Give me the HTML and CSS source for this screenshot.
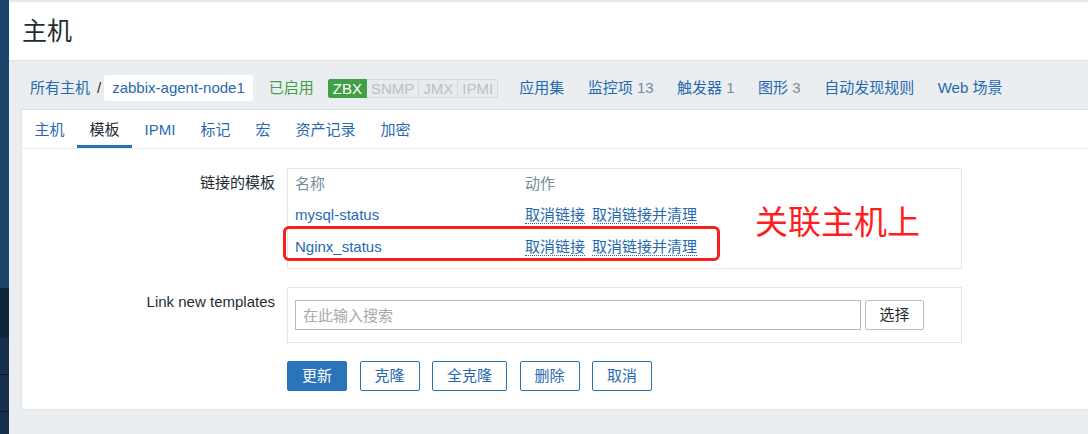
FILE: index.html
```html
<!DOCTYPE html>
<html lang="zh-CN">
<head>
<meta charset="utf-8">
<title>主机</title>
<link rel="stylesheet" href="styles.css">
</head>
<body>
<div class="app">
  <aside class="sidebar">
    <div class="sb-a"></div>
    <div class="sb-b"></div>
    <div class="sb-c"></div>
    <div class="sb-c"></div>
    <div class="sb-d"></div>
  </aside>
  <div class="main">
    <header class="page-header"><h1 class="title">主机</h1></header>
    <div class="content">
      <nav class="crumbs">
        <a class="link" href="#">所有主机</a><span class="crumb-sep">/</span><span class="crumb-current">zabbix-agent-node1</span>
        <span class="status-on">已启用</span>
        <span class="tags"><span class="tag tag-on">ZBX</span><span class="tag">SNMP</span><span class="tag">JMX</span><span class="tag">IPMI</span></span>
        <span class="nav-links">
          <a class="link" href="#">应用集</a>
          <a class="link" href="#">监控项<span class="count"> 13</span></a>
          <a class="link" href="#">触发器<span class="count"> 1</span></a>
          <a class="link" href="#">图形<span class="count"> 3</span></a>
          <a class="link" href="#">自动发现规则</a>
          <a class="link" href="#">Web 场景</a>
        </span>
      </nav>
      <section class="panel">
        <ul class="tabs">
          <li class="tab">主机</li>
          <li class="tab active">模板</li>
          <li class="tab">IPMI</li>
          <li class="tab">标记</li>
          <li class="tab">宏</li>
          <li class="tab">资产记录</li>
          <li class="tab">加密</li>
        </ul>
        <form class="form">
          <div class="form-row">
            <label class="form-label">链接的模板</label>
            <div class="box box-table">
              <table class="tpl-table">
                <thead>
                  <tr><th class="col-name">名称</th><th>动作</th></tr>
                </thead>
                <tbody>
                  <tr>
                    <td><a class="link" href="#">mysql-status</a></td>
                    <td><a class="link-dotted" href="#">取消链接</a><a class="link-dotted" href="#">取消链接并清理</a></td>
                  </tr>
                  <tr>
                    <td><a class="link" href="#">Nginx_status</a></td>
                    <td><a class="link-dotted" href="#">取消链接</a><a class="link-dotted" href="#">取消链接并清理</a></td>
                  </tr>
                </tbody>
              </table>
            </div>
          </div>
          <div class="form-row">
            <label class="form-label">Link new templates</label>
            <div class="box box-search">
              <input class="search-input" type="text" placeholder="在此输入搜索">
              <button class="btn-select" type="button">选择</button>
            </div>
          </div>
          <div class="form-actions">
            <button class="btn btn-primary" type="button">更新</button>
            <button class="btn" type="button">克隆</button>
            <button class="btn" type="button">全克隆</button>
            <button class="btn" type="button">删除</button>
            <button class="btn" type="button">取消</button>
          </div>
        </form>
      </section>
    </div>
  </div>
</div>
<div class="annot-box"></div>
<div class="annot-text">关联主机上</div>
</body>
</html>
```

FILE: styles.css
```css
html, body {
  margin: 0;
  padding: 0;
}
body {
  font-family: "Liberation Sans", "Noto Sans CJK SC", sans-serif;
  font-size: 15px;
  line-height: 20px;
  color: #1f2c33;
  background: #ebeef0;
  height: 434px;
  overflow: hidden;
  position: relative;
}
a {
  text-decoration: none;
}
.app {
  display: flex;
  height: 434px;
}
.sidebar {
  width: 9px;
  flex: none;
  display: flex;
  flex-direction: column;
  background: #15314b;
}
.sb-a { height: 288px; background: #1a4469; }
.sb-b { height: 50px; background: #0f2638; }
.sb-c { height: 36px; background: #15314b; border-bottom: 1px solid #0b1b29; }
.sb-d { flex: 1; background: #15314b; }

.main {
  flex: 1;
  min-width: 0;
  display: flex;
  flex-direction: column;
}
.page-header {
  height: 58px;
  border-top: 2px solid #e6e8ea;
  border-bottom: 1px solid #dfe4e7;
  background: #fff;
  display: flex;
  align-items: center;
  padding-left: 13px;
}
.title {
  margin: 0;
  font-size: 25px;
  font-weight: normal;
  line-height: 30px;
  color: #1f2c33;
}
.content {
  padding-left: 12px;
}
.crumbs {
  display: flex;
  align-items: center;
  height: 26px;
  padding: 14px 0 8px 9px;
  white-space: nowrap;
}
.link {
  color: #2769b0;
}
.crumb-sep {
  margin: 0 3px 0 7px;
  color: #1f2c33;
}
.crumb-current {
  background: #fff;
  color: #2769b0;
  height: 26px;
  line-height: 26px;
  padding: 0 8px;
  border-radius: 2px;
}
.status-on {
  margin-left: 16px;
  color: #429e47;
}
.tags {
  display: flex;
  margin-left: 14px;
}
.tag {
  height: 17px;
  line-height: 17px;
  padding: 0 4px;
  border: 1px solid #d5dade;
  background: #e8ebed;
  color: #b8c1c8;
  margin-left: -1px;
}
.tag:first-child {
  margin-left: 0;
  border-radius: 2px 0 0 2px;
}
.tag:last-child {
  border-radius: 0 2px 2px 0;
}
.tag-on {
  background: #429e47;
  border-color: #429e47;
  color: #fff;
  position: relative;
}
.nav-links {
  display: flex;
  gap: 23.5px;
  margin-left: 21px;
}
.count {
  color: #768d99;
}

.panel {
  background: #fff;
  border: 1px solid #dfe4e7;
  border-right: none;
}
.tabs {
  display: flex;
  margin: 0;
  padding: 0;
  list-style: none;
  border-bottom: 1px solid #ebeef0;
}
.tab {
  height: 38px;
  box-sizing: border-box;
  padding: 10px 12.5px 0;
  line-height: 20px;
  border-bottom: 3px solid transparent;
  color: #2769b0;
}
.tab.active {
  border-bottom-color: #2a72b6;
  color: #1f2c33;
}
.form {
  margin: 0;
  padding: 19px 0 18px;
}
.form-row {
  display: grid;
  grid-template-columns: 253px 675px;
  column-gap: 12px;
  margin-bottom: 18px;
}
.form-label {
  text-align: right;
  padding-top: 5px;
  line-height: 20px;
  color: #1f2c33;
}
.box {
  box-sizing: border-box;
  width: 675px;
  border: 1px solid #e6e6e6;
}
.box-table {
  padding: 0 7px 5px;
}
.tpl-table {
  border-collapse: collapse;
}
.tpl-table th {
  font-weight: normal;
  color: #768d99;
  text-align: left;
  height: 30px;
  padding: 0;
  vertical-align: middle;
}
.tpl-table td {
  height: 32px;
  padding: 0;
  vertical-align: middle;
}
.col-name {
  width: 230px;
}
.link-dotted {
  color: #2769b0;
  border-bottom: 1px dotted #2769b0;
  margin-right: 7px;
}
.box-search {
  display: flex;
  gap: 4px;
  padding: 12px 7px;
}
.search-input {
  box-sizing: border-box;
  width: 566px;
  height: 30px;
  border: 1px solid #acbbc2;
  border-radius: 0;
  padding: 0 7px;
  margin: 0;
  font-family: "Liberation Sans", "Noto Sans CJK SC", sans-serif;
  font-size: 15px;
  color: #1f2c33;
  outline: none;
}
.search-input::placeholder {
  color: #a9a9a9;
}
.btn-select {
  box-sizing: border-box;
  height: 30px;
  padding: 0 13.5px;
  margin: 0;
  border: 1px solid #b4c0c8;
  border-radius: 2px;
  background: #fff;
  color: #1f2c33;
  font-family: "Liberation Sans", "Noto Sans CJK SC", sans-serif;
  font-size: 15px;
  line-height: 28px;
}
.form-actions {
  display: flex;
  gap: 12.5px;
  padding-left: 265px;
}
.btn {
  box-sizing: border-box;
  height: 30px;
  padding: 0 14px;
  margin: 0;
  border: 1px solid #2a72b6;
  border-radius: 2px;
  background: #fff;
  color: #2769b0;
  font-family: "Liberation Sans", "Noto Sans CJK SC", sans-serif;
  font-size: 15px;
  line-height: 28px;
}
.btn-primary {
  background: #2b74b9;
  border-color: #2b74b9;
  color: #fff;
}

/* annotations drawn over the screenshot */
.annot-box {
  position: absolute;
  left: 283px;
  top: 226px;
  width: 437px;
  height: 35px;
  box-sizing: border-box;
  border: 3px solid #f5201e;
  border-radius: 6px;
}
.annot-text {
  position: absolute;
  left: 755px;
  top: 204px;
  font-family: "Noto Sans CJK SC", sans-serif;
  font-size: 33px;
  line-height: 33px;
  color: #ff1e1e;
  white-space: nowrap;
}
```
